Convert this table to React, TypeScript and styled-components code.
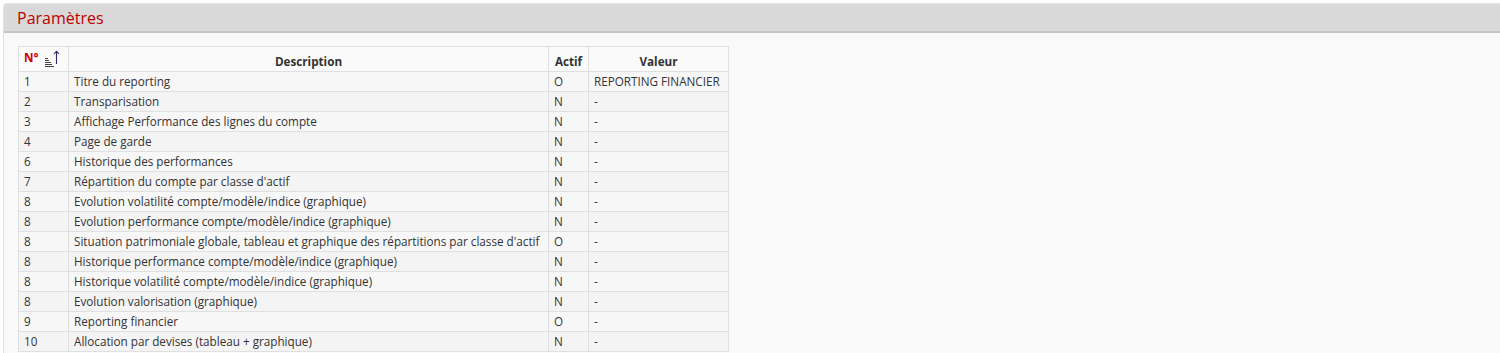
import React from "react";
import styled, { createGlobalStyle } from "styled-components";

const Global = createGlobalStyle`
  html, body { margin: 0; padding: 0; background: #ffffff; }
  body { font-family: "Open Sans", "Liberation Sans", sans-serif; }
`;

const Panel = styled.section`
  margin: 3px 0 0 3px;
  border: 1px solid #e2e2e2;
  border-right: none;
  border-radius: 4px 0 0 0;
  background: #f9f9f9;
  height: 360px;
  overflow: hidden;
`;

const Header = styled.header`
  background: #d9d9d9;
  border-bottom: 2px solid #c4c4c4;
  display: flex;
  align-items: center;
  padding-left: 13px;
  box-sizing: border-box;
  height: 29px;
`;

const Title = styled.h2`
  margin: 0;
  font-family: "Open Sans", "Liberation Sans", sans-serif;
  font-weight: 400;
  font-size: 16px;
  color: #c00000;
  line-height: 1;
`;

const Body = styled.div`
  padding: 13px 0 0 14px;
`;

const Table = styled.table`
  border-collapse: collapse;
  table-layout: fixed;
  width: 710px;
  font-family: "Open Sans", "Liberation Sans", sans-serif;
  font-size: 11.7px;
  color: #333;
`;

const Th = styled.th<{ $w: number }>`
  width: ${(p) => p.$w}px;
  height: 25px;
  border: 1px solid #e0e0e0;
  background: #fafafa;
  font-weight: 700;
  text-align: center;
  vertical-align: bottom;
  padding: 0 4px 2px;
  box-sizing: border-box;
  color: #333;
`;

const NumTh = styled(Th)`
  text-align: left;
  vertical-align: top;
  padding: 2px 0 0 5px;
`;

const NumHead = styled.div`
  display: flex;
  align-items: flex-start;
  gap: 5px;
  color: #cc0000;
  font-weight: 700;
`;

const SortIcon = styled.svg`
  margin-top: 1px;
`;

const Tr = styled.tr<{ $alt: boolean }>`
  background: ${(p) => (p.$alt ? "#f7f7f7" : "#f4f4f4")};
`;

const Td = styled.td`
  height: 19px;
  border: 1px solid #e0e0e0;
  padding: 0 5px;
  white-space: nowrap;
  overflow: hidden;
  line-height: 19px;
`;

const rows: [string, string, string, string][] = [
  ["1", "Titre du reporting", "O", "REPORTING FINANCIER"],
  ["2", "Transparisation", "N", "-"],
  ["3", "Affichage Performance des lignes du compte", "N", "-"],
  ["4", "Page de garde", "N", "-"],
  ["6", "Historique des performances", "N", "-"],
  ["7", "Répartition du compte par classe d'actif", "N", "-"],
  ["8", "Evolution volatilité compte/modèle/indice (graphique)", "N", "-"],
  ["8", "Evolution performance compte/modèle/indice (graphique)", "N", "-"],
  ["8", "Situation patrimoniale globale, tableau et graphique des répartitions par classe d'actif", "O", "-"],
  ["8", "Historique performance compte/modèle/indice (graphique)", "N", "-"],
  ["8", "Historique volatilité compte/modèle/indice (graphique)", "N", "-"],
  ["8", "Evolution valorisation (graphique)", "N", "-"],
  ["9", "Reporting financier", "O", "-"],
  ["10", "Allocation par devises (tableau + graphique)", "N", "-"],
];

export default function App() {
  return (
    <>
      <Global />
      <Panel>
        <Header>
          <Title>Paramètres</Title>
        </Header>
        <Body>
          <Table>
            <thead>
              <tr>
                <NumTh $w={50}>
                  <NumHead>
                    <span>N°</span>
                    <SortIcon width="16" height="18" viewBox="0 0 16 18">
                      <g stroke="#444" strokeWidth="1">
                        <line x1="1" y1="8.5" x2="4" y2="8.5" />
                        <line x1="1" y1="10.5" x2="5" y2="10.5" />
                        <line x1="1" y1="12.5" x2="7" y2="12.5" />
                        <line x1="1" y1="14.5" x2="8" y2="14.5" />
                        <line x1="1" y1="16.5" x2="10" y2="16.5" />
                      </g>
                      <g stroke="#2b2b6b" strokeWidth="1.1" fill="none">
                        <line x1="12.5" y1="1.5" x2="12.5" y2="14" />
                        <polyline points="10,4 12.5,1.3 15,4" />
                      </g>
                    </SortIcon>
                  </NumHead>
                </NumTh>
                <Th $w={480}>Description</Th>
                <Th $w={40}>Actif</Th>
                <Th $w={140}>Valeur</Th>
              </tr>
            </thead>
            <tbody>
              {rows.map((r, i) => (
                <Tr key={i} $alt={i % 2 === 0}>
                  <Td>{r[0]}</Td>
                  <Td>{r[1]}</Td>
                  <Td>{r[2]}</Td>
                  <Td>{r[3]}</Td>
                </Tr>
              ))}
            </tbody>
          </Table>
        </Body>
      </Panel>
    </>
  );
}
